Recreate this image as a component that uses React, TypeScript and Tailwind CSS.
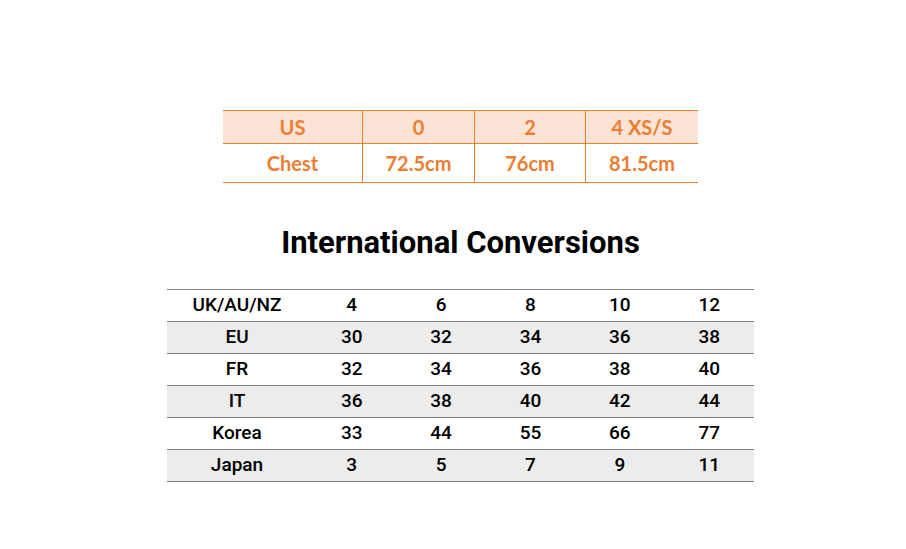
import React from "react";

const orangeHead = ["US", "0", "2", "4 XS/S"];
const orangeRow = ["Chest", "72.5cm", "76cm", "81.5cm"];
const oWidths = ["w-[139px]", "w-[112px]", "w-[111px]", "w-[113px]"];

const rows: string[][] = [
  ["UK/AU/NZ", "4", "6", "8", "10", "12"],
  ["EU", "30", "32", "34", "36", "38"],
  ["FR", "32", "34", "36", "38", "40"],
  ["IT", "36", "38", "40", "42", "44"],
  ["Korea", "33", "44", "55", "66", "77"],
  ["Japan", "3", "5", "7", "9", "11"],
];

export default function App() {
  return (
    <div className="w-[906px] h-[549px] bg-white flex flex-col items-start pl-[223px] pt-[110px]">
      <div
        className="w-[475px] border-t border-b border-[#ed7d31] text-[#ed7d31] font-bold text-[20px]"
        style={{ fontFamily: "Lato, 'Open Sans', sans-serif" }}
      >
        <div className="flex h-[33px] bg-[#fbe4d5] border-b border-[#ed7d31]">
          {orangeHead.map((t, i) => (
            <div
              key={i}
              className={`${oWidths[i]} flex items-center justify-center ${i > 0 ? "border-l border-[#ed7d31]" : ""}`}
            >
              {t}
            </div>
          ))}
        </div>
        <div className="flex h-[38px]">
          {orangeRow.map((t, i) => (
            <div
              key={i}
              className={`${oWidths[i]} flex items-center justify-center ${i > 0 ? "border-l border-[#ed7d31]" : ""}`}
            >
              {t}
            </div>
          ))}
        </div>
      </div>

      <div
        className="w-[475px] mt-[44px] text-center text-black text-[31px] font-bold leading-none"
        style={{ fontFamily: "Roboto, 'DejaVu Sans', sans-serif" }}
      >
        International Conversions
      </div>

      <div
        className="-ml-[56px] mt-[31px] w-[587px] border-t border-[#808080] text-black text-[19px] font-medium"
        style={{ fontFamily: "Roboto, 'DejaVu Sans', sans-serif" }}
      >
        {rows.map((r, ri) => (
          <div
            key={ri}
            className={`flex h-[32px] border-b border-[#808080] ${ri % 2 === 1 ? "bg-[#ececec]" : "bg-white"}`}
          >
            {r.map((c, ci) => (
              <div
                key={ci}
                className={`${ci === 0 ? "w-[140px]" : "w-[89.4px]"} flex items-center justify-center`}
              >
                {c}
              </div>
            ))}
          </div>
        ))}
      </div>
    </div>
  );
}
